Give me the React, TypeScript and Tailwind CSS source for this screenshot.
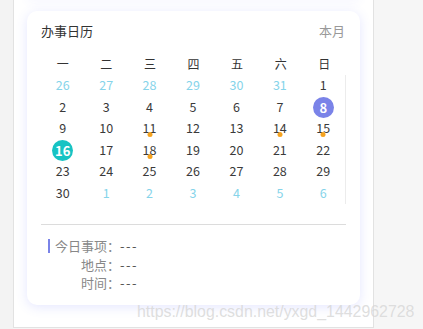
import React from "react";

type Day = { n: number; muted?: boolean; dot?: boolean; mark?: "purple" | "teal" };

const WEEK = ["一", "二", "三", "四", "五", "六", "日"];

const days: Day[] = [
  ...[26, 27, 28, 29, 30, 31].map((n) => ({ n, muted: true })),
  ...Array.from({ length: 30 }, (_, i) => ({ n: i + 1 } as Day)),
  ...[1, 2, 3, 4, 5, 6].map((n) => ({ n, muted: true })),
];
days[13].mark = "purple"; // 8
days[21].mark = "teal"; // 16
for (const n of [11, 14, 15, 18]) days[n + 5].dot = true;

const font = { fontFamily: '"Noto Sans CJK SC", "Liberation Sans", sans-serif' };

function Cell({ d }: { d: Day }) {
  return (
    <div className="relative flex h-[21.5px] items-center justify-center">
      {d.mark ? (
        <span
          className={
            d.mark === "purple"
              ? "flex size-[21px] items-center justify-center rounded-full bg-[#7a83e8] text-[13px] font-bold text-white"
              : "flex size-[21px] items-center justify-center rounded-full bg-[#17c3c3] text-[13px] font-bold text-white"
          }
        >
          {d.n}
        </span>
      ) : (
        <span className={d.muted ? "text-[12.5px] text-[#86d4ea]" : "text-[12.5px] text-[#3a3a3a]"}>{d.n}</span>
      )}
      {d.dot ? (
        <span className="absolute left-1/2 top-[14px] size-[5px] -translate-x-1/2 rounded-full bg-[#f5a31f]" />
      ) : null}
    </div>
  );
}

export default function App() {
  return (
    <div className="relative flex h-[329px] w-[423px] overflow-hidden bg-[#f5f5f5]" style={font}>
      <div className="w-[13px] bg-[#f3f3f3]" />
      <div className="flex h-[328px] w-[361px] flex-col border-x border-b border-[#e2e2e2] bg-white px-[13px]">
        <div className="-mt-[2px] h-[2px] rounded-b-[10px] bg-white shadow-[0_0_10px_rgba(90,100,255,0.18)]" />
        <div className="mt-[11px] h-[294px] rounded-[10px] bg-white px-[14px] pt-[12px] shadow-[0_2px_12px_rgba(90,100,255,0.16)]">
          <div className="flex h-[16px] items-center justify-between text-[13px]">
            <span className="text-[#333]">办事日历</span>
            <span className="mr-[1px] text-[#999]">本月</span>
          </div>
          <div className="mt-[14px] grid h-[22px] grid-cols-7 items-center text-center text-[12px] text-[#333]">
            {WEEK.map((w) => (
              <span key={w}>{w}</span>
            ))}
          </div>
          <div className="grid grid-cols-7 border-r border-[#ececec]">
            {days.map((d, i) => (
              <Cell key={i} d={d} />
            ))}
          </div>
          <div className="mt-[20px] border-t border-[#dcdcdc]" />
          <div className="mt-[12px] flex flex-col pl-[7px] text-[13px] leading-[18.5px]">
            <div className="flex items-center">
              <span className="mr-[5px] h-[14px] w-[2px] bg-[#7a83e8]" />
              <span className="w-[65px] text-right text-[#888]">今日事项：</span>
              <span className="tracking-[1.5px] text-[#555]">---</span>
            </div>
            <div className="flex items-center pl-[7px]">
              <span className="w-[65px] text-right text-[#888]">地点：</span>
              <span className="tracking-[1.5px] text-[#555]">---</span>
            </div>
            <div className="flex items-center pl-[7px]">
              <span className="w-[65px] text-right text-[#888]">时间：</span>
              <span className="tracking-[1.5px] text-[#555]">---</span>
            </div>
          </div>
        </div>
      </div>
      <div className="flex-1 bg-[#f6f6f6]" />
      <span
        className="absolute left-[137px] top-[300px] text-[15.9px] text-[#d6d6d6]/80"
        style={{ fontFamily: '"Liberation Sans", Arial, sans-serif' }}
      >
        https://blog.csdn.net/yxgd_1442962728
      </span>
    </div>
  );
}
